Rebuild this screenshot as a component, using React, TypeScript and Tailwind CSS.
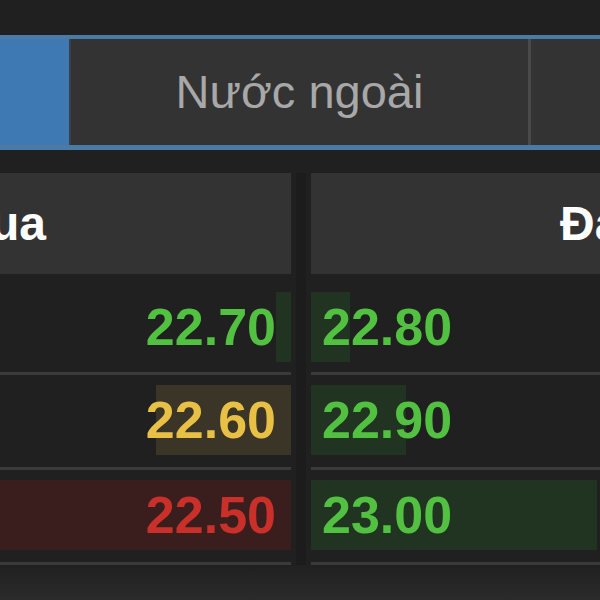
import React from "react";

type Level = {
  bid: string;
  bidColor: string;
  bidBar: string;
  bidDepth: number;
  ask: string;
  askDepth: number;
};

const levels: Level[] = [
  { bid: "22.70", bidColor: "text-[#52c142]", bidBar: "bg-[#213321]", bidDepth: 15, ask: "22.80", askDepth: 39 },
  { bid: "22.60", bidColor: "text-[#e8c046]", bidBar: "bg-[#3a3526]", bidDepth: 135, ask: "22.90", askDepth: 95 },
  { bid: "22.50", bidColor: "text-[#c9302a]", bidBar: "bg-[#3a1e1e]", bidDepth: 291, ask: "23.00", askDepth: 286 },
];

const Gutter = () => (
  <div className="w-[20px] flex justify-center">
    <div className="w-[10px] bg-[#1c1c1c]" />
  </div>
);

const App: React.FC = () => {
  return (
    <div className="w-[600px] h-[600px] overflow-hidden bg-[#202020] font-['Liberation_Sans',Arial,sans-serif]">
      <div className="h-[35px]" />

      {/* market tabs */}
      <div className="flex h-[115px] border-t-4 border-b-[5px] border-[#4b7aa5] bg-[#4b7aa5]">
        <div className="w-[69px] bg-[#3e79b4]" />
        <div className="w-[2px] bg-[#3b4047]" />
        <div className="w-[457px] bg-[#333333] flex items-center justify-center text-[47px] text-[#a8a8a8] whitespace-nowrap">
          Nước ngoài
        </div>
        <div className="w-[3px] bg-[#4a4a4a]" />
        <div className="flex-1 bg-[#333333]" />
      </div>

      <div className="h-[23px]" />

      {/* header */}
      <div className="flex h-[101px]">
        <div className="w-[291px] bg-[#333333] flex items-center overflow-hidden">
          <span className="-ml-[50px] text-[48px] font-bold text-white whitespace-nowrap">Mua</span>
        </div>
        <Gutter />
        <div className="flex-1 bg-[#333333] flex items-center overflow-hidden pl-[249px]">
          <span className="text-[48px] font-bold text-white whitespace-nowrap">Đang bán</span>
        </div>
      </div>

      {/* price levels */}
      {levels.map((lv, i) => (
        <div key={lv.bid} className="flex">
          <div className="w-[291px] flex flex-col">
            <div className={i === 0 ? "h-[18px]" : "h-[10px]"} />
            <div className="relative h-[70px] flex items-center justify-end pr-[15px]">
              <div className={`absolute right-0 top-0 h-full ${lv.bidBar}`} style={{ width: lv.bidDepth }} />
              <span className={`relative text-[52px] font-bold ${lv.bidColor}`}>{lv.bid}</span>
            </div>
            <div className={i === 0 ? "h-[10px]" : "h-[12px]"} />
            <div className="h-[3px] bg-[#3a3a3a]" />
          </div>
          <Gutter />
          <div className="flex-1 flex flex-col">
            <div className={i === 0 ? "h-[18px]" : "h-[10px]"} />
            <div className="relative h-[70px] flex items-center pl-[11px]">
              <div className="absolute left-0 top-0 h-full bg-[#213321]" style={{ width: lv.askDepth }} />
              <span className="relative text-[52px] font-bold text-[#52c142]">{lv.ask}</span>
            </div>
            <div className={i === 0 ? "h-[10px]" : "h-[12px]"} />
            <div className="h-[3px] bg-[#3a3a3a]" />
          </div>
        </div>
      ))}

      <div className="h-[40px] bg-gradient-to-b from-[#202020] to-[#2d2d2d]" />
    </div>
  );
};

export default App;
